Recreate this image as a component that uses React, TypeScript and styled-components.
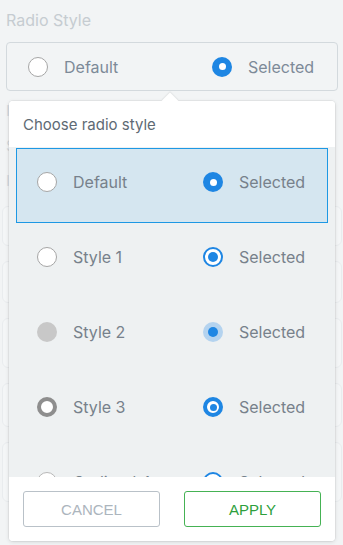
import React from "react";
import styled, { createGlobalStyle, css } from "styled-components";

type Variant = "default" | "style1" | "style2" | "style3" | "style4";

interface StyleOption {
  name: string;
  variant: Variant;
}

const options: StyleOption[] = [
  { name: "Default", variant: "default" },
  { name: "Style 1", variant: "style1" },
  { name: "Style 2", variant: "style2" },
  { name: "Style 3", variant: "style3" },
  { name: "Outlined 4", variant: "style4" },
];

const GlobalStyle = createGlobalStyle`
  html, body {
    margin: 0;
    padding: 0;
    background: #f2f4f5;
    font-family: Inter, "Noto Sans", sans-serif;
  }
  * {
    box-sizing: border-box;
  }
`;

const BLUE = "#1e86e3";

const Page = styled.div`
  position: relative;
  width: 343px;
  height: 545px;
  overflow: hidden;
  padding: 10px 5px 0 6px;
  background: #f2f4f5;
`;

const Title = styled.div`
  font-size: 16px;
  line-height: 20px;
  color: #c6ccd1;
`;

const PreviewBox = styled.div`
  margin-top: 12px;
  height: 49px;
  border: 1px solid #d3d9dd;
  border-radius: 4px;
  display: grid;
  grid-template-columns: 184px 1fr;
  align-items: center;
  padding-left: 21px;
`;

const Ghost = styled.div`
  margin-top: 10px;
  display: flex;
  flex-direction: column;
  gap: 15px;
  opacity: 0.55;
`;

const GhostLabel = styled.div<{ $green?: boolean }>`
  font-size: 15px;
  line-height: 20px;
  color: ${(p) => (p.$green ? "#59b36a" : "#c3c8cd")};
`;

const GhostCard = styled.div<{ $h: number }>`
  height: ${(p) => p.$h}px;
  margin-left: -4px;
  margin-right: -4px;
  border: 1px solid #e2e6e9;
  border-radius: 6px;
  background: #f7f8f9;
`;

const Option = styled.div`
  display: flex;
  align-items: center;
  gap: 16px;
`;

const Label = styled.span<{ $tone?: "header" }>`
  font-size: 16px;
  line-height: 20px;
  color: ${(p) => (p.$tone === "header" ? "#7d8a98" : "#77818b")};
  white-space: nowrap;
`;

const dot = (size: number, color: string) => css`
  &::after {
    content: "";
    position: absolute;
    left: 50%;
    top: 50%;
    width: ${size}px;
    height: ${size}px;
    margin: ${-size / 2}px 0 0 ${-size / 2}px;
    border-radius: 50%;
    background: ${color};
  }
`;

const Radio = styled.span<{ $variant: Variant; $checked: boolean }>`
  position: relative;
  flex: 0 0 20px;
  width: 20px;
  height: 20px;
  border-radius: 50%;
  ${({ $variant, $checked }) => {
    if (!$checked) {
      switch ($variant) {
        case "style2":
          return css`
            background: #c8c8c8;
          `;
        case "style3":
          return css`
            background: #fff;
            border: 4px solid #8e8e8e;
          `;
        case "style4":
          return css`
            background: #fff;
            border: 1px solid #b8b8b8;
          `;
        default:
          return css`
            background: #fff;
            border: 1px solid #a6a6a6;
          `;
      }
    }
    switch ($variant) {
      case "default":
        return css`
          background: ${BLUE};
          ${dot(7, "#fff")}
        `;
      case "style1":
        return css`
          background: #fff;
          border: 2px solid ${BLUE};
          ${dot(10, BLUE)}
        `;
      case "style2":
        return css`
          background: #b4d3ef;
          ${dot(10, BLUE)}
        `;
      case "style3":
        return css`
          background: #fff;
          border: 4px solid ${BLUE};
          ${dot(7, BLUE)}
        `;
      default:
        return css`
          background: #fff;
          border: 2px solid ${BLUE};
          ${dot(6, BLUE)}
        `;
    }
  }}
`;

const Popover = styled.div`
  position: absolute;
  top: 101px;
  left: 9px;
  width: 326px;
  height: 440px;
  display: flex;
  flex-direction: column;
  background: #fff;
  border-radius: 4px;
  box-shadow: 0 0 0 1px rgba(0, 0, 0, 0.04), 0 1px 4px rgba(0, 0, 0, 0.12);

  &::before {
    content: "";
    position: absolute;
    top: -6px;
    left: 155px;
    width: 12px;
    height: 12px;
    background: #fff;
    transform: rotate(45deg);
    box-shadow: -1px -1px 1px rgba(0, 0, 0, 0.06);
  }
`;

const PopHeader = styled.div`
  position: relative;
  height: 46px;
  display: flex;
  align-items: center;
  padding-left: 14px;
  font-size: 15px;
  color: #5e6a74;
  background: #fff;
  border-radius: 4px 4px 0 0;
`;

const List = styled.div`
  flex: 1;
  overflow: hidden;
  background: #eef1f2;
  padding: 1px 7px 0;
`;

const Row = styled.div<{ $active?: boolean }>`
  height: 75px;
  display: grid;
  grid-template-columns: 166px 1fr;
  align-items: start;
  padding: 23px 0 0 20px;
  border: 1px solid ${(p) => (p.$active ? "#1d98e4" : "transparent")};
  background: ${(p) => (p.$active ? "#d5e6f0" : "transparent")};
`;

const Footer = styled.div`
  height: 64px;
  display: grid;
  grid-template-columns: 1fr 1fr;
  gap: 24px;
  padding: 14px 14px;
  background: #fff;
  border-radius: 0 0 4px 4px;
`;

const Button = styled.button<{ $primary?: boolean }>`
  height: 36px;
  background: #fff;
  border: 1.5px solid ${(p) => (p.$primary ? "#45b254" : "#b9c1c8")};
  border-radius: 3px;
  font-family: "Liberation Sans", Arial, sans-serif;
  font-size: 15px;
  color: ${(p) => (p.$primary ? "#2d9f3c" : "#acb5bd")};
  cursor: pointer;
`;

export default function App() {
  return (
    <>
      <GlobalStyle />
      <Page>
        <Title>Radio Style</Title>
        <PreviewBox>
          <Option>
            <Radio $variant="default" $checked={false} />
            <Label $tone="header">Default</Label>
          </Option>
          <Option>
            <Radio $variant="default" $checked />
            <Label $tone="header">Selected</Label>
          </Option>
        </PreviewBox>

        <Ghost>
          <GhostLabel>Icon Size</GhostLabel>
          <GhostLabel>Size</GhostLabel>
          <GhostLabel>Indicator</GhostLabel>
          <GhostCard $h={40} />
          <GhostCard $h={42} />
          <GhostCard $h={50} />
          <GhostCard $h={44} />
          <GhostCard $h={60} />
        </Ghost>

        <Popover>
          <PopHeader>Choose radio style</PopHeader>
          <List>
            {options.map((o, i) => (
              <Row key={o.name} $active={i === 0}>
                <Option>
                  <Radio $variant={o.variant} $checked={false} />
                  <Label>{o.name}</Label>
                </Option>
                <Option>
                  <Radio $variant={o.variant} $checked />
                  <Label>Selected</Label>
                </Option>
              </Row>
            ))}
          </List>
          <Footer>
            <Button>CANCEL</Button>
            <Button $primary>APPLY</Button>
          </Footer>
        </Popover>
      </Page>
    </>
  );
}
